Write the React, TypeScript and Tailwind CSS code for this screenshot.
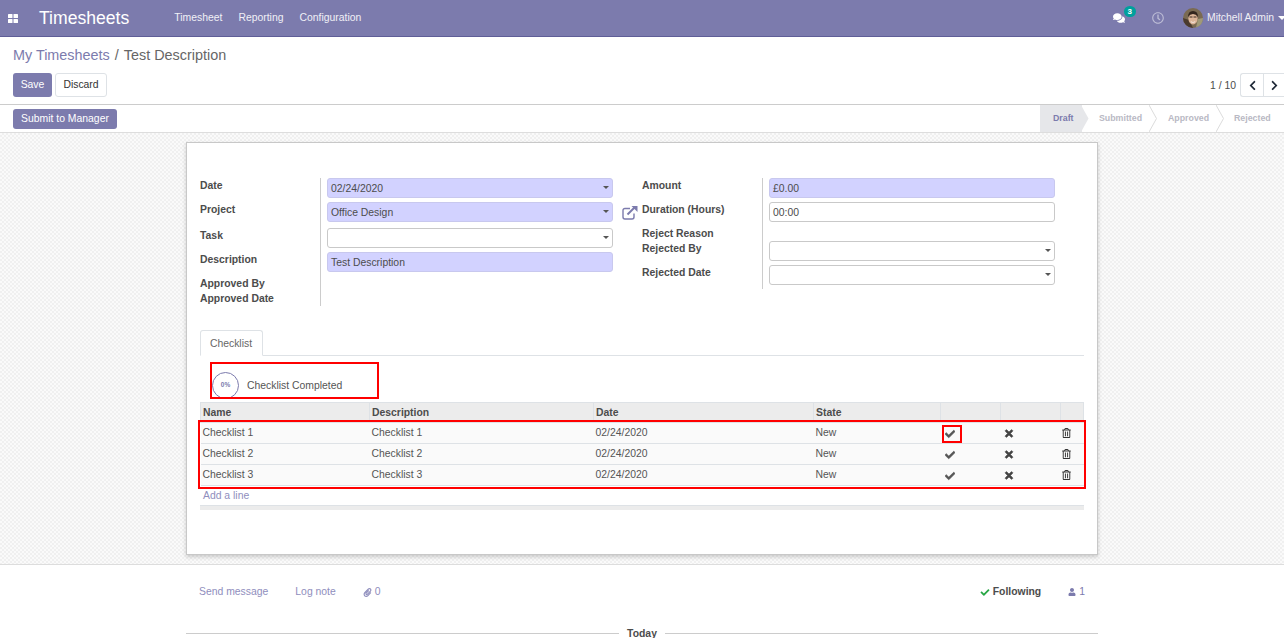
import { FaCheck, FaTimes, FaRegTrashAlt, FaChevronLeft, FaChevronRight, FaPaperclip, FaUser, FaComments, FaRegClock } from "react-icons/fa";

function SelectCaret() {
  return <span className="absolute right-[3px] top-[7px] h-0 w-0 border-x-[3px] border-t-[3px] border-x-transparent border-t-[#555]" />;
}

function Field({ value = "", required = false, caret = false }: { value?: string; required?: boolean; caret?: boolean }) {
  return (
    <div className={`relative h-5 w-full rounded-[3px] border px-[3px] text-[10.4px] leading-[20px] text-[#4c4c4c] ${required ? "border-[#c8c8ee] bg-[#d2d2ff]" : "border-[#c9c9c9] bg-white"}`}>
      {value}
      {caret ? <SelectCaret /> : null}
    </div>
  );
}

function Label({ children, className = "" }: { children: string; className?: string }) {
  return <div className={`text-[10.4px] font-bold leading-[15px] text-[#4c4c4c] ${className}`}>{children}</div>;
}

function Stage({ label, width, pad, active = false, last = false }: { label: string; width: string; pad: string; active?: boolean; last?: boolean }) {
  return (
    <div className={`relative flex h-full items-center text-[8.8px] font-bold ${width} ${pad} ${active ? "bg-[#e6e7ea] text-[#7c7bad]" : "text-[#b9b9c4]"}`}>
      {label}
      {!last ? (
        <svg className="absolute -right-[8px] top-0 z-10 h-[27px] w-[9px]" viewBox="0 0 9 27">
          <path d="M0 0 L7.5 13.5 L0 27" fill={active ? "#e6e7ea" : "white"} stroke={active ? "none" : "#dcdcdc"} />
        </svg>
      ) : null}
    </div>
  );
}

const rows = ["Checklist 1", "Checklist 2", "Checklist 3"];

export default function App() {
  return (
    <div className="flex h-[638px] w-[1284px] flex-col overflow-hidden bg-white font-['Liberation_Sans',Arial,sans-serif] text-[10.4px] text-[#4c4c4c]">
      <header className="flex h-[37px] shrink-0 items-center border-b border-[#5f5e97] bg-[#7c7bad] text-white">
        <svg className="ml-2 h-[9px] w-[10px]" viewBox="0 0 10 9" fill="white">
          <rect width="4.5" height="4" rx="0.6" />
          <rect x="5.5" width="4.5" height="4" rx="0.6" />
          <rect y="5" width="4.5" height="4" rx="0.6" />
          <rect x="5.5" y="5" width="4.5" height="4" rx="0.6" />
        </svg>
        <span className="ml-[21px] pt-[2px] text-[17.6px] leading-none">Timesheets</span>
        <nav className="ml-[45px] flex gap-4 text-[10.4px] text-[#f0f0f6]">
          <span>Timesheet</span>
          <span>Reporting</span>
          <span>Configuration</span>
        </nav>
        <div className="ml-auto flex items-center">
          <div className="relative mr-[27px]">
            <FaComments className="h-[12px] w-[12px]" />
            <span className="absolute -right-[11px] -top-[6px] rounded-[6px] bg-[#00a09d] px-[4px] text-[8px] font-bold leading-[11px]">3</span>
          </div>
          <FaRegClock className="mr-[19px] h-[12px] w-[12px] text-[#bdbdd6]" />
          <svg className="mr-[4px] h-[20px] w-[20px]" viewBox="0 0 20 20">
            <circle cx="10" cy="10" r="10" fill="#7a6a52" />
            <path d="M0 10 A10 10 0 0 0 10 20 L6 12Z" fill="#4a3a2e" />
            <path d="M20 10 A10 10 0 0 1 13 19.5 L15 11Z" fill="#a09a78" />
            <ellipse cx="10" cy="10.5" rx="4.6" ry="6" fill="#dcb598" />
            <path d="M5 9 Q5 3 10 3 Q15 3 15 9 Q13 6 10 6 Q7 6 5 9Z" fill="#33261e" />
            <path d="M6.5 9 h3 M10.5 9 h3" stroke="#3a2a20" strokeWidth="1" />
            <path d="M7.5 13 Q10 15 12.5 13 L11.5 14.5 L8.5 14.5Z" fill="white" />
          </svg>
          <span className="text-[10.4px] text-[#f0f0f6]">Mitchell Admin</span>
          <span className="ml-[4px] -mr-[2px] h-0 w-0 border-x-[4px] border-t-[4px] border-x-transparent border-t-white" />
        </div>
      </header>

      <div className="flex h-[68px] shrink-0 flex-col border-b border-[#ccc] px-[13px] pt-[9px]">
        <div className="text-[14.4px] leading-[18px] text-[#666]">
          <span className="text-[#7c7bad]">My Timesheets</span>
          <span className="mx-[5px]">/</span>
          <span>Test Description</span>
        </div>
        <div className="mt-[9px] flex items-start">
          <button className="h-6 w-[39px] rounded-[3px] bg-[#7c7bad] text-[10.4px] text-white">Save</button>
          <button className="ml-[3px] h-6 w-[52px] rounded-[3px] border border-[#dee2e6] bg-white text-[10.4px] text-[#333]">Discard</button>
          <span className="ml-auto mt-[5px] text-[10.4px] text-[#4c4c4c]">1 / 10</span>
          <div className="-mr-[13px] ml-[4px] flex h-6 w-[44px] rounded-l-[3px] border border-r-0 border-[#dee2e6] text-[#1f2937]">
            <span className="flex w-[23px] items-center justify-center border-r border-[#dee2e6]"><FaChevronLeft className="h-[11px] w-[11px]" /></span>
            <span className="flex flex-1 items-center justify-center"><FaChevronRight className="h-[11px] w-[11px]" /></span>
          </div>
        </div>
      </div>

      <div className="flex h-[28px] shrink-0 items-center justify-between border-b border-[#ddd] pl-[13px]">
        <button className="h-5 w-[104px] rounded-[3px] bg-[#7c7bad] text-[10.4px] text-white">Submit to Manager</button>
        <div className="flex h-full items-center">
          <Stage label="Draft" width="w-[42px]" pad="pl-[13px]" active />
          <Stage label="Submitted" width="w-[68px]" pad="pl-[17px]" />
          <Stage label="Approved" width="w-[67px]" pad="pl-[18px]" />
          <Stage label="Rejected" width="w-[67px]" pad="pl-[17px]" last />
        </div>
      </div>

      <main className="flex h-[432px] shrink-0 justify-center border-b border-[#ddd] bg-[repeating-conic-gradient(#f0f0f0_0_25%,#fafafa_0_50%)] bg-[length:4px_4px] pt-[9px]">
        <div className="h-[413px] w-[912px] border border-[#c8c8c8] bg-white px-[13px] pt-[35px] shadow-[0_2px_4px_rgba(0,0,0,0.18)]">
          <div className="flex">
            <div className="flex w-[413px]">
              <div className="h-[128px] w-[121px] shrink-0 border-r border-[#ccc]">
                <Label className="pb-[9px]">Date</Label>
                <Label className="pb-[11px]">Project</Label>
                <Label className="pb-[9px]">Task</Label>
                <Label className="pb-[9px]">Description</Label>
                <Label>Approved By</Label>
                <Label>Approved Date</Label>
              </div>
              <div className="flex flex-1 flex-col gap-[4px] pl-[6px]">
                <Field value="02/24/2020" required caret />
                <Field value="Office Design" required caret />
                <div className="mt-[2px]"><Field caret /></div>
                <Field value="Test Description" required />
              </div>
            </div>
            <div className="ml-[9px] h-[20px] w-[20px] pt-[27px]">
              <svg className="h-[15px] w-[16px] text-[#7c7bad]" viewBox="0 0 16 15" fill="none" stroke="currentColor">
                <path d="M8 3.5 H3 Q1 3.5 1 5.5 V12 Q1 14 3 14 H10 Q12 14 12 12 V8.5" strokeWidth="1.4" />
                <path d="M5.5 9.5 L12.5 2.5" strokeWidth="2" />
                <path d="M9.5 1 H15.5 V7Z" fill="currentColor" stroke="none" />
              </svg>
            </div>
            <div className="flex w-[413px]">
              <div className="h-[111px] w-[121px] shrink-0 border-r border-[#ccc]">
                <Label className="pb-[9px]">Amount</Label>
                <Label className="pb-[9px]">Duration (Hours)</Label>
                <Label>Reject Reason</Label>
                <Label className="pb-[9px]">Rejected By</Label>
                <Label>Rejected Date</Label>
              </div>
              <div className="flex flex-1 flex-col pl-[6px]">
                <div className="w-[286px]"><Field value="£0.00" required /></div>
                <div className="mt-[4px] w-[286px]"><Field value="00:00" /></div>
                <div className="mt-[19px] w-[286px]"><Field caret /></div>
                <div className="mt-[4px] w-[286px]"><Field caret /></div>
              </div>
            </div>
          </div>

          <div className="mt-[24px] border-b border-[#dee2e6]">
            <div className="-mb-px flex h-[26px] w-[63px] items-center justify-center rounded-t-[3px] border border-[#dee2e6] border-b-white bg-white pr-[1px] pt-[1px] text-[#666]">Checklist</div>
          </div>

          <div className="relative flex h-[46px] items-center pl-[12px] pt-[12px]">
            <div className="absolute left-[10px] top-[6px] h-[37px] w-[169px] border-2 border-[#f00]" />
            <div className="flex h-[27px] w-[27px] items-center justify-center rounded-full border border-[#7c7bad] text-[6.5px] font-bold text-[#7c7bad]">0%</div>
            <span className="ml-2 pt-[2px] text-[#555]">Checklist Completed</span>
          </div>

          <div className="relative">
            <div className="absolute -left-[2px] top-[18px] h-[69px] w-[888px] border-2 border-[#f00]" />
            <table className="w-[884px] table-fixed border-collapse text-left text-[10.4px]">
              <thead>
                <tr className="h-[20px] bg-[#ececec] font-bold text-[#4c4c4c]">
                  <th className="w-[169px] border border-[#dee2e6] pl-[2px]">Name</th>
                  <th className="w-[224px] border border-[#dee2e6] pl-[2px]">Description</th>
                  <th className="w-[220px] border border-[#dee2e6] pl-[2px]">Date</th>
                  <th className="w-[127px] border border-[#dee2e6] pl-[2px]">State</th>
                  <th className="w-[60px] border border-[#dee2e6]" />
                  <th className="w-[60px] border border-[#dee2e6]" />
                  <th className="border border-[#dee2e6]" />
                </tr>
              </thead>
              <tbody>
                {rows.map((r, i) => (
                  <tr key={r} className="h-[21px] border-b border-[#dee2e6] bg-[#fafafa] text-[#555]">
                    <td className="pl-[2px]">{r}</td>
                    <td className="pl-[2px]">{r}</td>
                    <td className="pl-[2px]">02/24/2020</td>
                    <td className="pl-[2px]">New</td>
                    <td className="pl-[4px]">
                      <span className="relative inline-block translate-y-[1px] align-middle">
                        <FaCheck className="h-[10px] w-[10px] stroke-[30] text-[#555]" />
                        {i === 0 ? <span className="absolute -left-[3px] -top-[4px] h-[18px] w-[20px] border-2 border-[#f00]" /> : null}
                      </span>
                    </td>
                    <td className="pl-[3px]"><FaTimes className="h-[11px] w-[10px] stroke-[30] text-[#444]" /></td>
                    <td className="pl-[1px]"><FaRegTrashAlt className="h-[10px] w-[9px] text-[#333]" /></td>
                  </tr>
                ))}
              </tbody>
            </table>
            <div className="pl-[3px] pt-[1px] leading-[18px] text-[#8f8ebd]">Add a line</div>
            <div className="h-[5px] w-[884px] border-t border-[#dee2e6] bg-[#ececec]" />
          </div>
        </div>
      </main>

      <div className="flex-1">
        <div className="mx-auto flex w-[912px] items-center px-[13px] pt-[20px] leading-[14px]">
          <span className="text-[#8f8ebd]">Send message</span>
          <span className="ml-[27px] text-[#8f8ebd]">Log note</span>
          <span className="ml-[27px] flex items-center gap-[3px] text-[#8f8ebd]"><FaPaperclip className="h-[9px] w-[9px]" />0</span>
          <span className="ml-auto flex items-center gap-[3px] font-bold text-[#4c4c4c]"><FaCheck className="h-[9px] w-[10px] text-[#28a745]" />Following</span>
          <span className="ml-[27px] flex items-center gap-[3px] text-[#7c7bad]"><FaUser className="h-[8px] w-[8px]" />1</span>
        </div>
        <div className="mx-auto mt-[27px] flex w-[912px] items-center gap-2 font-bold">
          <div className="h-px flex-1 bg-[#ccc]" />
          <span className="text-[#4c4c4c]">Today</span>
          <div className="h-px flex-1 bg-[#ccc]" />
        </div>
      </div>
    </div>
  );
}
